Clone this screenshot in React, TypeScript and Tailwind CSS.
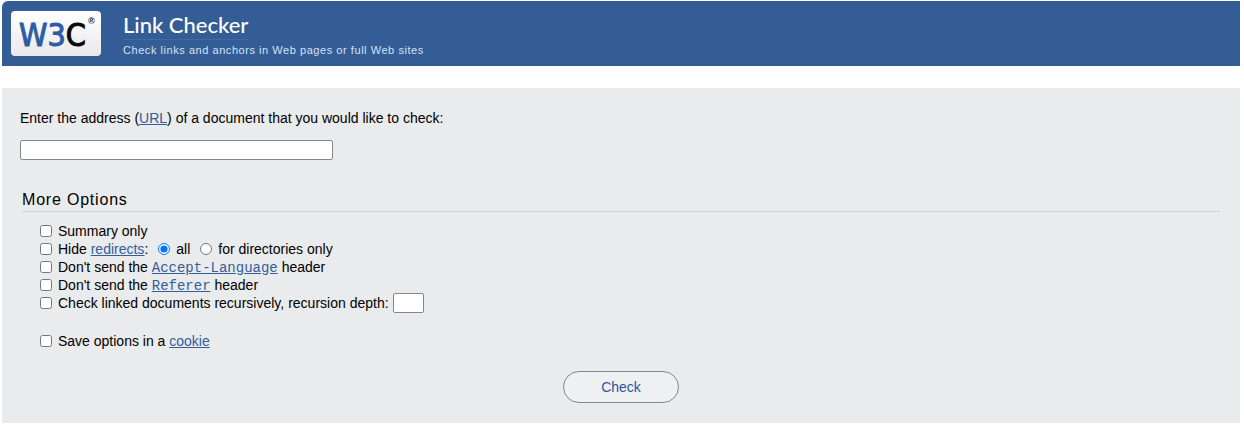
import { useState } from "react";
import type { FormEvent, ReactNode } from "react";

const linkClass = "text-[#355d9b] underline";
const checkboxClass = "size-3 shrink-0 my-0 mr-1.5";
const radioClass = "mr-1.5 ml-2.5 size-3";

function W3CLogo() {
  return (
    <svg
      role="img"
      aria-label="W3C"
      viewBox="0 0 90 45"
      className="block h-[45px] w-[90px]"
    >
      <defs>
        <linearGradient id="plate" x1="0" y1="0" x2="0" y2="1">
          <stop offset="0" stopColor="#ffffff" />
          <stop offset="1" stopColor="#e9e9ea" />
        </linearGradient>
      </defs>
      <rect width="90" height="45" rx="4" fill="url(#plate)" />
      <text
        x="8"
        y="35"
        fontSize="32"
        fontFamily="'DejaVu Sans Condensed', 'DejaVu Sans', sans-serif"
        fill="#2f5ba4"
        stroke="#2f5ba4"
        strokeWidth="1"
      >
        W3
        <tspan fill="#0a0a0a" stroke="#0a0a0a">
          C
        </tspan>
      </text>
      <text
        x="77"
        y="13"
        fontSize="9"
        fontWeight="bold"
        fontFamily="'Liberation Sans', sans-serif"
        fill="#222222"
      >
        ®
      </text>
    </svg>
  );
}

type OptionProps = {
  id: string;
  children: ReactNode;
};

function Option({ id, children }: OptionProps) {
  return (
    <div className="flex h-[18px] items-center">
      <input id={id} type="checkbox" className={checkboxClass} />
      {children}
    </div>
  );
}

export default function App() {
  const [url, setUrl] = useState<string>("");
  const [depth, setDepth] = useState<string>("");
  const [hide, setHide] = useState<string>("all");

  const handleSubmit = (e: FormEvent) => {
    e.preventDefault();
  };

  return (
    <div className="bg-white pt-px pr-1 pb-1 pl-0.5 font-['Liberation_Sans',Arial,sans-serif] text-sm text-black">
      <header className="flex items-start gap-[22px] rounded-tl-md bg-[#355d95] px-[9px] pt-2.5 pb-2">
        <a href="#w3c">
          <W3CLogo />
        </a>
        <div>
          <h1 className="w-fit border-b border-[#4169a3] font-[Lato,sans-serif] text-[22px] leading-7 font-medium text-white">
            <a href="#checklink">Link Checker</a>
          </h1>
          <p className="mt-0.5 text-[11px] leading-4 tracking-wider text-[#d3e2f8]">
            Check links and anchors in Web pages or full Web sites
          </p>
        </div>
      </header>

      <form
        onSubmit={handleSubmit}
        className="mt-[22px] bg-[#e9ebec] px-[18px] py-5"
      >
        <p className="leading-5">
          <label htmlFor="uri">
            Enter the address (
            <a href="#url" className={linkClass}>
              URL
            </a>
            ) of a document that you would like to check:
          </label>
        </p>
        <input
          id="uri"
          type="text"
          value={url}
          onChange={(e) => setUrl(e.target.value)}
          className="mt-3 block h-5 w-[313px] rounded-xs border border-[#85878a] bg-white px-1"
        />

        <fieldset className="mt-7 px-0.5">
          <legend className="w-full border-b border-[#cfd1d3] text-base leading-[23px] tracking-wider">
            More Options
          </legend>
          <div className="pt-2.5 pl-[18px]">
            <Option id="summary">
              <label htmlFor="summary">Summary only</label>
            </Option>
            <Option id="hide">
              <label htmlFor="hide">
                Hide{" "}
                <a href="#redirects" className={linkClass}>
                  redirects
                </a>
                :
              </label>
              <input
                id="hide-all"
                type="radio"
                name="hide_type"
                checked={hide === "all"}
                onChange={() => setHide("all")}
                className={radioClass}
              />
              <label htmlFor="hide-all">all</label>
              <input
                id="hide-dir"
                type="radio"
                name="hide_type"
                checked={hide === "dir"}
                onChange={() => setHide("dir")}
                className={radioClass}
              />
              <label htmlFor="hide-dir">for directories only</label>
            </Option>
            <Option id="no-lang">
              <label htmlFor="no-lang">
                Don't send the{" "}
                <a href="#accept-language" className={linkClass}>
                  <code className="font-['Liberation_Mono',monospace]">
                    Accept-Language
                  </code>
                </a>{" "}
                header
              </label>
            </Option>
            <Option id="no-referer">
              <label htmlFor="no-referer">
                Don't send the{" "}
                <a href="#referer" className={linkClass}>
                  <code className="font-['Liberation_Mono',monospace]">
                    Referer
                  </code>
                </a>{" "}
                header
              </label>
            </Option>
            <Option id="recursive">
              <label htmlFor="recursive">
                Check linked documents recursively,
              </label>
              <label htmlFor="depth" className="ml-1">
                recursion depth:
              </label>
              <input
                id="depth"
                type="text"
                value={depth}
                onChange={(e) => setDepth(e.target.value)}
                className="ml-1 h-5 w-[31px] rounded-xs border border-[#85878a] bg-white px-1"
              />
            </Option>
            <div className="mt-5">
              <Option id="cookie">
                <label htmlFor="cookie">
                  Save options in a{" "}
                  <a href="#cookie" className={linkClass}>
                    cookie
                  </a>
                </label>
              </Option>
            </div>
          </div>
        </fieldset>

        <div className="mt-[21px] flex justify-center">
          <button
            type="submit"
            className="h-8 rounded-full border border-[#85878a] bg-[#eef0f2] px-[37px] text-[#2b5796]"
          >
            Check
          </button>
        </div>
      </form>
    </div>
  );
}
